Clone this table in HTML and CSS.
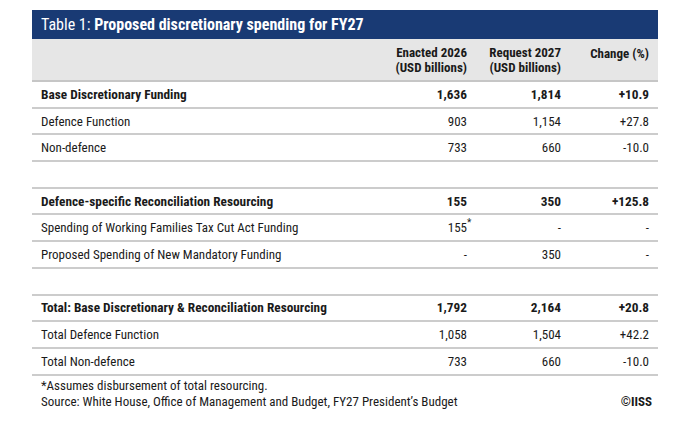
FILE: index.html
```html
<!DOCTYPE html>
<html lang="en">
<head>
    <meta charset="UTF-8">
    <title>Table 1: Proposed discretionary spending for FY27</title>
    <link rel="stylesheet" href="styles.css">
</head>
<body>
    <div class="figure">
        <div class="title-bar">Table 1: <strong>Proposed discretionary spending for FY27</strong></div>
        <table class="data-table">
            <thead>
                <tr>
                    <th class="label-col"></th>
                    <th>Enacted 2026<br>(USD billions)</th>
                    <th>Request 2027<br>(USD billions)</th>
                    <th class="change-col">Change (%)</th>
                </tr>
            </thead>
            <tbody>
                <tr class="total">
                    <td>Base Discretionary Funding</td><td>1,636</td><td>1,814</td><td>+10.9</td>
                </tr>
                <tr>
                    <td>Defence Function</td><td>903</td><td>1,154</td><td>+27.8</td>
                </tr>
                <tr>
                    <td>Non-defence</td><td>733</td><td>660</td><td>-10.0</td>
                </tr>
                <tr class="spacer"><td colspan="4"></td></tr>
                <tr class="total">
                    <td>Defence-specific Reconciliation Resourcing</td><td>155</td><td>350</td><td>+125.8</td>
                </tr>
                <tr>
                    <td>Spending of Working Families Tax Cut Act Funding</td><td>155<sup class="note">*</sup></td><td>-</td><td>-</td>
                </tr>
                <tr>
                    <td>Proposed Spending of New Mandatory Funding</td><td>-</td><td>350</td><td>-</td>
                </tr>
                <tr class="spacer"><td colspan="4"></td></tr>
                <tr class="total">
                    <td>Total: Base Discretionary &amp; Reconciliation Resourcing</td><td>1,792</td><td>2,164</td><td>+20.8</td>
                </tr>
                <tr>
                    <td>Total Defence Function</td><td>1,058</td><td>1,504</td><td>+42.2</td>
                </tr>
                <tr>
                    <td>Total Non-defence</td><td>733</td><td>660</td><td>-10.0</td>
                </tr>
            </tbody>
        </table>
        <div class="footer">
            <div class="notes">
                *Assumes disbursement of total resourcing.<br>
                Source: White House, Office of Management and Budget, FY27 President’s Budget
            </div>
            <div class="credit">©IISS</div>
        </div>
    </div>
</body>
</html>
```

FILE: styles.css
```css
* {
    box-sizing: border-box;
}
body {
    margin: 0;
    background-color: #ffffff;
    font-family: Roboto, "DejaVu Sans Condensed", sans-serif;
    font-stretch: condensed;
    color: #1a1a1a;
}
.figure {
    width: 626px;
    margin: 10px 0 0 32px;
}
.title-bar {
    height: 29px;
    padding: 1px 9px 0;
    background-color: #193a74;
    color: #ffffff;
    font-size: 16px;
    line-height: 28px;
}
.title-bar strong {
    font-weight: bold;
}
.data-table {
    width: 100%;
    border-collapse: collapse;
    font-size: 13px;
}
.data-table th {
    height: 42px;
    padding: 0 9px 0 0;
    background-color: #e6e6e6;
    border-bottom: 2px solid #c6c6c6;
    text-align: right;
    vertical-align: middle;
    font-weight: bold;
    line-height: 15px;
}
.data-table th.label-col {
    width: 350px;
}
.data-table th:nth-child(2),
.data-table th:nth-child(3) {
    width: 94px;
}
.data-table th.change-col {
    vertical-align: top;
    padding-top: 7px;
}
.data-table td {
    height: 26.7px;
    padding: 0 9px 0 0;
    border-bottom: 2px solid #cccccc;
    text-align: right;
    vertical-align: middle;
    white-space: nowrap;
}
.data-table td:first-child {
    padding-left: 9px;
    text-align: left;
}
.data-table tr.total td {
    font-weight: bold;
    font-size: 13.3px;
}
.note {
    position: absolute;
    margin-top: -2px;
    font-size: 10px;
    line-height: 1;
}
.footer {
    display: flex;
    justify-content: space-between;
    align-items: flex-end;
    padding: 2px 6px 0 9px;
    font-size: 13px;
    line-height: 16px;
}
.credit {
    font-weight: bold;
}
```
